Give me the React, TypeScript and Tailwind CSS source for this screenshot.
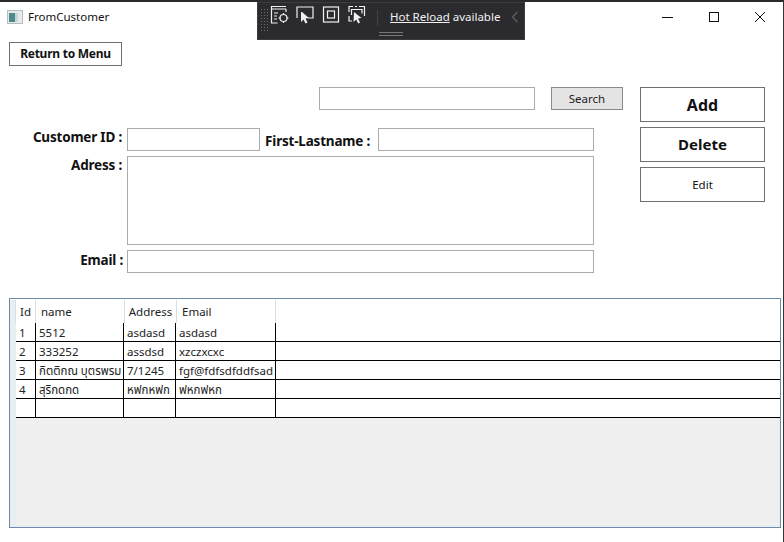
const rows = [
  ["1", "5512", "asdasd", "asdasd"],
  ["2", "333252", "assdsd", "xzczxcxc"],
  ["3", "กิตติกณ บุตรพรม", "7/1245", "fgf@fdfsdfddfsad"],
  ["4", "สุริกดกด", "หฟกหฟก", "ฟหกฟหก"],
  ["", "", "", ""],
];

function Field({ className }: { className: string }) {
  return <div className={`border border-[#ababab] bg-white ${className}`} />;
}

function Label({ className, children }: { className: string; children: string }) {
  return <div className={`font-bold text-[13.5px] tracking-[-0.2px] leading-[18px] text-[#111] text-right whitespace-nowrap ${className}`}>{children}</div>;
}

function ActionButton({ children, className }: { children: string; className: string }) {
  return (
    <div className={`w-[125px] h-[35px] border border-[#707070] bg-white flex items-center justify-center text-[#111] ${className}`}>
      {children}
    </div>
  );
}

function HotReloadBar() {
  return (
    <div className="absolute left-[257px] top-0 w-[268px] h-[38px] bg-[#2b2b2f] border border-[#3c3c40] text-[#f1f1f1] flex items-start">
      <div className="w-[8px] h-[24px] mt-[5px] ml-[2px] shrink-0 opacity-60 bg-[radial-gradient(#999_1px,transparent_1px)] bg-[length:3px_3px]" />
      <svg width="100" height="26" viewBox="0 0 100 26" fill="none" stroke="#f1f1f1" strokeWidth="1.2" className="ml-[1px] mt-0 shrink-0">
        <path d="M2 3.500h15M2.500 3v17h6M2 6h15M17 6v3" />
        <path d="M5 10h4M5 13h3M5 16h3" />
        <circle cx="14.500" cy="15" r="3.500" />
        <path d="M14.500 10v2M14.500 18v2M9.500 15h2M17.500 15h2" />
        <g transform="translate(-1 0)">
          <path d="M29 15V4h16v11h-5" />
          <path d="M33 9l1 0 7 6-3.500.5 2 4-2 1-2-4-2.500 2.500z" fill="#f1f1f1" stroke="none" />
        </g>
        <g transform="translate(-1 0)">
          <rect x="55.500" y="4" width="15" height="15" />
          <rect x="59.500" y="8" width="7" height="7" />
        </g>
        <g transform="translate(-2 0)">
          <path d="M82 9V3.500h4M92 3.500h5.500V9M82 13v5h3M90 3.500h-2M97.500 13V9M84.500 12V6.500h10.500v4" />
          <path d="M87 9l7.500 6-3.500.5 2 4-1.800 1-2-4-2.700 2.500z" fill="#f1f1f1" stroke="none" />
        </g>
      </svg>
      <div className="w-px h-[16px] bg-[#444] mt-[7px] ml-[8px] shrink-0" />
      <div className="ml-[12px] mt-[5px] text-[11.5px] leading-[18px] whitespace-nowrap shrink-0">
        <span className="underline">Hot Reload</span> available
      </div>
      <svg width="8" height="12" viewBox="0 0 8 12" fill="none" stroke="#5a5a5e" strokeWidth="1.500" className="ml-[11px] mt-[8px] shrink-0">
        <path d="M6.500 1L1.500 6l5 5" />
      </svg>
      <div className="absolute left-[121px] top-[29px] w-[24px] h-[4px] border-y border-[#77777a]" />
    </div>
  );
}

export default function App() {
  return (
    <div className="relative w-[784px] h-[542px] bg-white border-t-2 border-t-[#2a2a2a] border-r border-r-[#333] overflow-hidden font-['Noto_Sans','Noto_Sans_Thai','Noto_Sans_CJK_SC',sans-serif] text-[#111]">
      <HotReloadBar />

      <div className="h-[29px] flex items-center pl-[7px]">
        <svg width="16" height="14" viewBox="0 0 16 14">
          <rect x="0.500" y="0.500" width="15" height="13" fill="#e6eaea" stroke="#b8bcc0" />
          <rect x="2" y="3" width="6" height="9" fill="#4e8a8a" />
          <rect x="8" y="3" width="3" height="9" fill="#c4d6d6" />
        </svg>
        <span className="ml-[5px] text-[11.5px] leading-[16px]">FromCustomer</span>
        <div className="ml-auto flex items-center mr-[16px] gap-[32px]">
          <svg width="14" height="14" viewBox="0 0 14 14" stroke="#111" strokeWidth="1" fill="none"><path d="M1 7.500h11" /></svg>
          <svg width="14" height="14" viewBox="0 0 14 14" stroke="#111" strokeWidth="1" fill="none"><rect x="2.500" y="2.500" width="9" height="9" /></svg>
          <svg width="14" height="14" viewBox="0 0 14 14" stroke="#111" strokeWidth="1" fill="none"><path d="M2 2l10 10M12 2L2 12" /></svg>
        </div>
      </div>

      <div className="ml-[9px] mt-[11px] w-[113px] h-[24px] border border-[#707070] flex items-center justify-center font-bold text-[12px] tracking-[-0.25px]">
        Return to Menu
      </div>

      <div className="flex mt-[21px] h-[186px]">
        <div className="w-[640px] shrink-0">
          <div className="flex h-[23px]">
            <Field className="ml-[319px] w-[216px] h-[23px]" />
            <div className="ml-[16px] w-[72px] h-[23px] bg-[#e4e4e4] border border-[#8a8a8a] flex items-center justify-center text-[11.5px] text-[#222]">
              Search
            </div>
          </div>
          <div className="flex mt-[18px] h-[23px]">
            <Label className="w-[122px]">Customer ID :</Label>
            <Field className="ml-[5px] w-[133px] h-[23px]" />
            <Label className="ml-[5px] w-[105px] pt-[4px]">First-Lastname :</Label>
            <Field className="ml-[8px] w-[216px] h-[23px]" />
          </div>
          <div className="flex mt-[5px] h-[89px]">
            <Label className="w-[122px]">Adress :</Label>
            <Field className="ml-[5px] w-[467px] h-[89px]" />
          </div>
          <div className="flex mt-[5px] h-[23px]">
            <Label className="w-[123px] pt-[1px]">Email :</Label>
            <Field className="ml-[4px] w-[467px] h-[23px]" />
          </div>
        </div>
        <div className="flex flex-col gap-[5px]">
          <ActionButton className="font-bold text-[16px]">Add</ActionButton>
          <ActionButton className="font-bold text-[15px]">Delete</ActionButton>
          <ActionButton className="text-[11.5px]">Edit</ActionButton>
        </div>
      </div>

      <div className="ml-[9px] mt-[25px] w-[772px] h-[230px] border border-[#6f8aa8] bg-[#f0f0f0] flex flex-col text-[11.5px] text-[#222]">
        <div className="h-[24px] pt-[1px] flex bg-white shrink-0">
          <div className="w-[6px] bg-[#e9eef3] border-r border-[#d5dfe5]" />
          <div className="w-[20px] border-r border-[#d5dfe5] flex items-center justify-center">Id</div>
          <div className="w-[89px] border-r border-[#d5dfe5] flex items-center pl-[5px]">name</div>
          <div className="w-[52px] border-r border-[#d5dfe5] flex items-center justify-center whitespace-nowrap">Address</div>
          <div className="w-[99px] border-r border-[#d5dfe5] flex items-center pl-[5px]">Email</div>
          <div className="flex-1" />
        </div>
        {rows.map((r, i) => (
          <div key={i} className="h-[19px] flex shrink-0 bg-white border-b border-black text-[11.5px] leading-[20px]">
            <div className="w-[6px] bg-[#e9eef3] -mb-px" />
            <div className="w-[20px] border-r border-black pl-[3px] overflow-hidden whitespace-nowrap">{r[0]}</div>
            <div className="w-[88px] border-r border-black pl-[3px] overflow-hidden whitespace-nowrap">{r[1]}</div>
            <div className="w-[52px] border-r border-black pl-[3px] overflow-hidden whitespace-nowrap">{r[2]}</div>
            <div className="w-[100px] border-r border-black pl-[3px] overflow-hidden whitespace-nowrap">{r[3]}</div>
            <div className="flex-1" />
          </div>
        ))}
        <div className="flex-1 border-l-[6px] border-r-[3px] border-b-[2px] border-[#e9eef3]" />
      </div>
    </div>
  );
}
